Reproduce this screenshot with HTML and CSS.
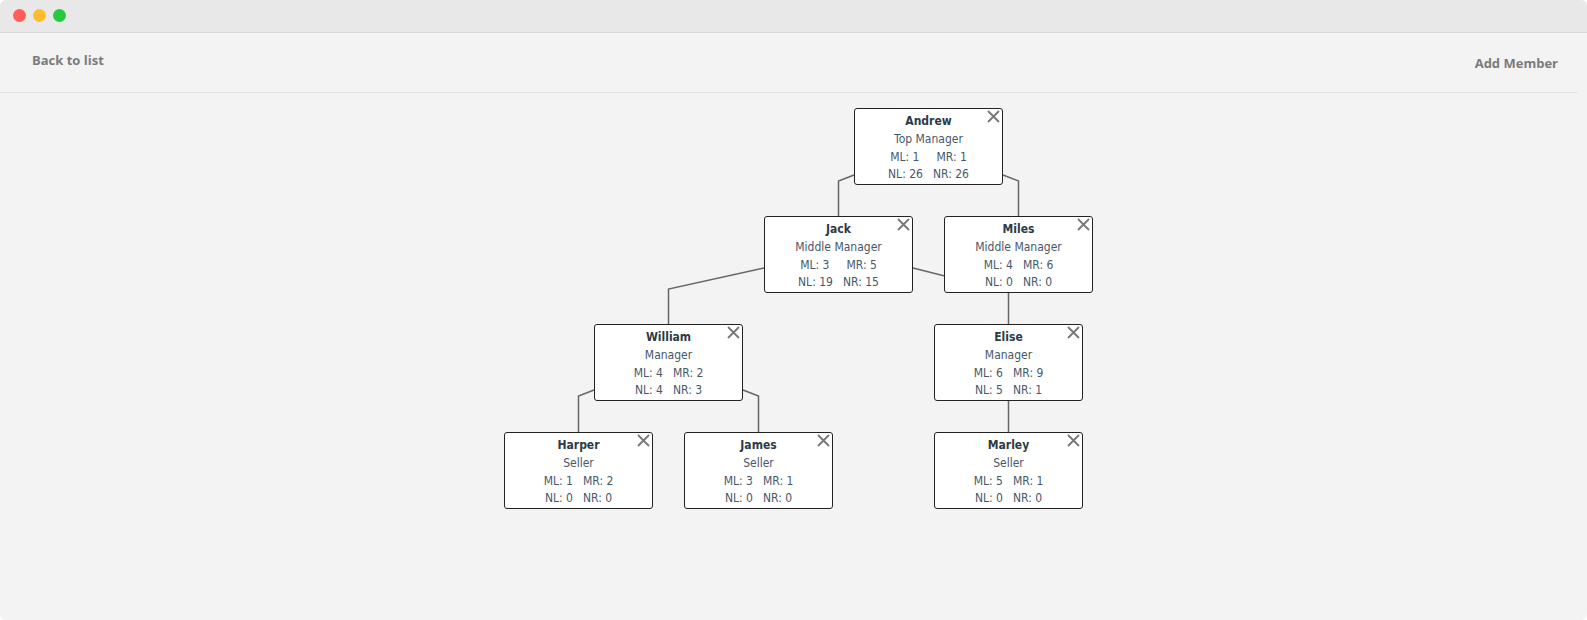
FILE: index.html
```html
<!DOCTYPE html>
<html lang="en">
<head>
    <meta charset="UTF-8">
    <meta name="viewport" content="width=device-width, initial-scale=1.0">
    <title>Members tree</title>
    <link rel="stylesheet" href="styles.css">
</head>
<body>
    <div class="window">
        <div class="titlebar">
            <span class="dot red"></span>
            <span class="dot yellow"></span>
            <span class="dot green"></span>
        </div>

        <header>
            <a href="#" class="header-link">Back to list</a>
            <a href="#" class="header-link">Add Member</a>
        </header>

        <div class="tree">
            <!-- connectors, drawn under the nodes -->
            <svg class="links" width="1587" height="528">
                <polyline points="854,82 838.5,88 838.5,123"/>
                <polyline points="1003,82 1018.5,88 1018.5,123"/>
                <polyline points="764,175 668.5,196 668.5,231"/>
                <polyline points="913,175 1008.5,199 1008.5,231"/>
                <polyline points="594,297 578.5,303 578.5,339"/>
                <polyline points="743,297 758.5,303 758.5,339"/>
                <polyline points="1008.5,299 1008.5,339"/>
            </svg>

            <div class="node" style="left:854px; top:15px">
                <div class="node-name">Andrew</div>
                <div class="node-role">Top Manager</div>
                <div class="stats"><span class="pad">ML: 1</span><span>MR: 1</span></div>
                <div class="stats"><span>NL: 26</span><span>NR: 26</span></div>
                <svg class="remove" width="13" height="13" viewBox="0 0 13 13"><path d="M1 1L12 12M12 1L1 12"/></svg>
            </div>

            <div class="node" style="left:764px; top:123px">
                <div class="node-name">Jack</div>
                <div class="node-role">Middle Manager</div>
                <div class="stats"><span class="pad">ML: 3</span><span>MR: 5</span></div>
                <div class="stats"><span>NL: 19</span><span>NR: 15</span></div>
                <svg class="remove" width="13" height="13" viewBox="0 0 13 13"><path d="M1 1L12 12M12 1L1 12"/></svg>
            </div>

            <div class="node" style="left:944px; top:123px">
                <div class="node-name">Miles</div>
                <div class="node-role">Middle Manager</div>
                <div class="stats"><span>ML: 4</span><span>MR: 6</span></div>
                <div class="stats"><span>NL: 0</span><span>NR: 0</span></div>
                <svg class="remove" width="13" height="13" viewBox="0 0 13 13"><path d="M1 1L12 12M12 1L1 12"/></svg>
            </div>

            <div class="node" style="left:594px; top:231px">
                <div class="node-name">William</div>
                <div class="node-role">Manager</div>
                <div class="stats"><span>ML: 4</span><span>MR: 2</span></div>
                <div class="stats"><span>NL: 4</span><span>NR: 3</span></div>
                <svg class="remove" width="13" height="13" viewBox="0 0 13 13"><path d="M1 1L12 12M12 1L1 12"/></svg>
            </div>

            <div class="node" style="left:934px; top:231px">
                <div class="node-name">Elise</div>
                <div class="node-role">Manager</div>
                <div class="stats"><span>ML: 6</span><span>MR: 9</span></div>
                <div class="stats"><span>NL: 5</span><span>NR: 1</span></div>
                <svg class="remove" width="13" height="13" viewBox="0 0 13 13"><path d="M1 1L12 12M12 1L1 12"/></svg>
            </div>

            <div class="node" style="left:504px; top:339px">
                <div class="node-name">Harper</div>
                <div class="node-role">Seller</div>
                <div class="stats"><span>ML: 1</span><span>MR: 2</span></div>
                <div class="stats"><span>NL: 0</span><span>NR: 0</span></div>
                <svg class="remove" width="13" height="13" viewBox="0 0 13 13"><path d="M1 1L12 12M12 1L1 12"/></svg>
            </div>

            <div class="node" style="left:684px; top:339px">
                <div class="node-name">James</div>
                <div class="node-role">Seller</div>
                <div class="stats"><span>ML: 3</span><span>MR: 1</span></div>
                <div class="stats"><span>NL: 0</span><span>NR: 0</span></div>
                <svg class="remove" width="13" height="13" viewBox="0 0 13 13"><path d="M1 1L12 12M12 1L1 12"/></svg>
            </div>

            <div class="node" style="left:934px; top:339px">
                <div class="node-name">Marley</div>
                <div class="node-role">Seller</div>
                <div class="stats"><span>ML: 5</span><span>MR: 1</span></div>
                <div class="stats"><span>NL: 0</span><span>NR: 0</span></div>
                <svg class="remove" width="13" height="13" viewBox="0 0 13 13"><path d="M1 1L12 12M12 1L1 12"/></svg>
            </div>
        </div>
    </div>
</body>
</html>
```

FILE: styles.css
```css
* {
    margin: 0;
    padding: 0;
    box-sizing: border-box;
}

body {
    background-color: #ffffff;
    font-family: 'Open Sans', 'Liberation Sans', sans-serif;
}

.window {
    height: 620px;
    background-color: #f3f3f3;
    border-radius: 6px;
    overflow: hidden;
    display: flex;
    flex-direction: column;
}

.titlebar {
    height: 33px;
    background-color: #e8e8e8;
    border-bottom: 1px solid #d8d8d8;
    display: flex;
    align-items: center;
    padding-left: 13px;
    padding-bottom: 2px;
    gap: 7px;
}

.dot {
    width: 13px;
    height: 13px;
    border-radius: 50%;
}

.red { background-color: #ff5f57; }
.yellow { background-color: #febc2e; }
.green { background-color: #28c840; }

header {
    height: 60px;
    margin-right: 9px;
    border-bottom: 1px solid #e3e3e3;
    display: flex;
    justify-content: space-between;
    align-items: center;
    padding: 0 20px 0 32px;
}

.header-link {
    font-size: 13px;
    font-weight: bold;
    color: #7b7b7b;
    text-decoration: none;
}

.header-link:first-child {
    margin-top: -5px;
}

.tree {
    position: relative;
    flex: 1;
}

.links {
    position: absolute;
    left: 0;
    top: 0;
}

.links polyline {
    fill: none;
    stroke: #666;
    stroke-width: 1.5;
}

.node {
    position: absolute;
    width: 149px;
    height: 77px;
    background-color: #fff;
    border: 1px solid #222;
    border-radius: 3px;
    padding-top: 4px;
    text-align: center;
    font-family: 'DejaVu Sans Condensed', 'DejaVu Sans', sans-serif;
    font-stretch: condensed;
    font-size: 12px;
    line-height: 17.8px;
    color: #475869;
}

.node-name {
    font-weight: bold;
    color: #2c3a47;
}

.stats {
    display: flex;
    justify-content: center;
    gap: 10px;
}

.stats .pad {
    padding-right: 7px;
}

.remove {
    position: absolute;
    top: 1px;
    right: 2px;
    cursor: pointer;
}

.remove path {
    stroke: #777;
    stroke-width: 1.8;
    fill: none;
}
```
